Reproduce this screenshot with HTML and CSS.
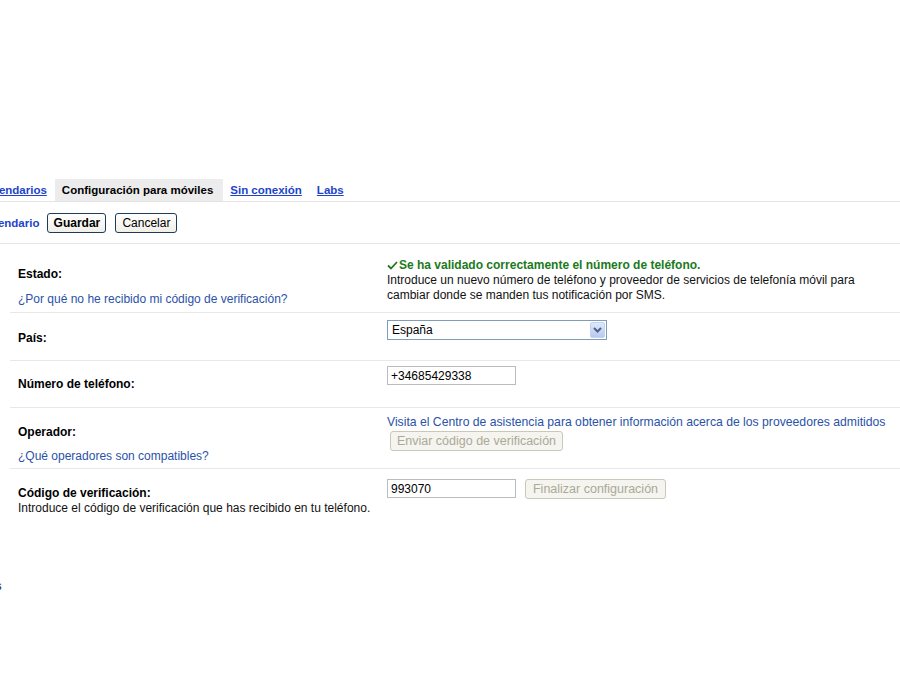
FILE: index.html
```html
<!DOCTYPE html>
<html lang="es">
<head>
<meta charset="utf-8">
<title>Configuración para móviles</title>
<link rel="stylesheet" href="styles.css">
</head>
<body>
<div class="page">
  <div class="tabs">
    <a class="tab-link" href="#">Calendarios</a>
    <span class="tab-active">Configuración para móviles</span>
    <a class="tab-link" href="#">Sin conexión</a>
    <a class="tab-link" href="#">Labs</a>
  </div>
  <div class="actions">
    <a class="back-link" href="#">Calendario</a>
    <button class="btn btn-primary">Guardar</button>
    <button class="btn btn-cancel">Cancelar</button>
  </div>
  <div class="settings">
    <div class="row row-estado">
      <div class="cell-left">
        <div class="label">Estado:</div>
        <a class="help-link gap-estado" href="#">¿Por qué no he recibido mi código de verificación?</a>
      </div>
      <div class="cell-right">
        <div class="ok"><svg class="check" width="11" height="9" viewBox="0 0 11 9"><path d="M1 4.5 L4 7.5 L10 1" fill="none" stroke="#1b7a1b" stroke-width="1.8"/></svg>Se ha validado correctamente el número de teléfono.</div>
        <div class="desc">Introduce un nuevo número de teléfono y proveedor de servicios de telefonía móvil para<br>cambiar donde se manden tus notificación por SMS.</div>
      </div>
    </div>
    <div class="row row-pais">
      <div class="cell-left"><div class="label">País:</div></div>
      <div class="cell-right">
        <div class="select"><span class="select-text">España</span><span class="select-arrow"><svg width="9" height="6" viewBox="0 0 9 6"><path d="M1 1 L4.5 4.5 L8 1" fill="none" stroke="#4d6185" stroke-width="2"/></svg></span></div>
      </div>
    </div>
    <div class="row row-numero">
      <div class="cell-left"><div class="label">Número de teléfono:</div></div>
      <div class="cell-right"><input class="field" type="text" value="+34685429338"></div>
    </div>
    <div class="row row-operador">
      <div class="cell-left">
        <div class="label">Operador:</div>
        <a class="help-link gap-operador" href="#">¿Qué operadores son compatibles?</a>
      </div>
      <div class="cell-right">
        <a class="help-link wide-link" href="#">Visita el Centro de asistencia para obtener información acerca de los proveedores admitidos</a>
        <div><button class="btn btn-disabled btn-send" disabled>Enviar código de verificación</button></div>
      </div>
    </div>
    <div class="row row-codigo">
      <div class="cell-left">
        <div class="label">Código de verificación:</div>
        <div class="desc">Introduce el código de verificación que has recibido en tu teléfono.</div>
      </div>
      <div class="cell-right inline">
        <input class="field" type="text" value="993070">
        <button class="btn btn-disabled btn-finish" disabled>Finalizar configuración</button>
      </div>
    </div>
  </div>
  <div class="footer-frag">s</div>
</div>
</body>
</html>
```

FILE: styles.css
```css
html, body {
  margin: 0;
  padding: 0;
  background: #ffffff;
  overflow: hidden;
}

body {
  font-family: "Liberation Sans", Arial, sans-serif;
  font-size: 12px;
  color: #000;
  width: 900px;
  height: 700px;
}

.page {
  padding-top: 179px;
}

.tabs {
  display: flex;
  align-items: stretch;
  height: 22px;
  margin-left: -26px;
  border-bottom: 1px solid #e4e4e4;
}

.tab-link,
.tab-active {
  display: flex;
  align-items: center;
  font-weight: bold;
  font-size: 11.5px;
  padding: 0 8px 0 7px;
}

.tab-link {
  color: #1d44c9;
  text-decoration: underline;
}

.tab-active {
  background: #ececec;
  color: #000;
  padding-right: 10px;
}

.actions {
  display: flex;
  align-items: center;
  gap: 8px;
  height: 41px;
  margin-left: -20px;
  border-bottom: 1px solid #e6e6e6;
}

.back-link {
  color: #1d44c9;
  font-weight: bold;
  text-decoration: none;
  font-size: 11.5px;
}

.btn {
  font-family: "Liberation Sans", Arial, sans-serif;
  font-size: 12px;
  height: 20px;
  padding: 0 5px;
  border: 1px solid #1f3b5c;
  border-radius: 3px;
  background: linear-gradient(#ffffff, #f0efe8);
  color: #000;
  line-height: 18px;
}

.btn-primary {
  font-weight: bold;
  width: 59px;
}

.btn-cancel {
  width: 62px;
  margin-left: 1px;
}

.btn-disabled {
  border-color: #cac8bb;
  background: #f5f4ee;
  color: #aca899;
  font-size: 12.5px;
}

.btn-send {
  width: 173px;
  margin-left: 3px;
}

.btn-finish {
  width: 141px;
  margin-left: 9px;
}

.settings {
  margin-left: 10px;
}

.row {
  display: grid;
  grid-template-columns: 377px 1fr;
  border-bottom: 1px solid #e8e8e8;
}

.row:last-child {
  border-bottom: none;
}

.cell-left {
  padding-left: 8px;
}

.label {
  font-weight: bold;
  line-height: 15px;
}

.help-link {
  display: block;
  color: #2a52a8;
  text-decoration: none;
  line-height: 15px;
}

.wide-link {
  font-size: 12.2px;
}

.desc {
  line-height: 15px;
  color: #111;
}

.ok {
  display: flex;
  align-items: center;
  color: #1b7a1b;
  font-weight: bold;
  line-height: 16px;
}

.check {
  margin-right: 1px;
}

.row-estado { height: 68px; }
.row-estado .cell-left { padding-top: 23px; }
.row-estado .cell-right { padding-top: 13px; }
.gap-estado { margin-top: 10px; }

.row-pais { height: 47px; }
.row-pais .cell-left { padding-top: 18px; }
.row-pais .cell-right { padding-top: 7px; }

.row-numero { height: 46px; }
.row-numero .cell-left { padding-top: 16px; }
.row-numero .cell-right { padding-top: 5px; }

.row-operador { height: 60px; }
.row-operador .cell-left { padding-top: 17px; }
.row-operador .cell-right { padding-top: 7px; }
.row-operador .btn-send { margin-top: 1px; }
.gap-operador { margin-top: 9px; }

.row-codigo { height: 60px; }
.row-codigo .cell-left { padding-top: 17px; }
.row-codigo .cell-right { padding-top: 10px; }

.inline {
  display: flex;
  align-items: flex-start;
}

.select {
  display: flex;
  width: 218px;
  height: 18px;
  border: 1px solid #7f9db9;
  background: #fff;
}

.select-text {
  flex: 1;
  padding-left: 4px;
  line-height: 18px;
}

.select-arrow {
  width: 15px;
  margin: 1px;
  display: flex;
  align-items: center;
  justify-content: center;
  background: linear-gradient(#dfe8fb, #b7c9ef);
  border: 1px solid #c3d3f5;
  border-radius: 2px;
  box-sizing: border-box;
}

.field {
  box-sizing: border-box;
  width: 129px;
  height: 19px;
  border: 1px solid #b9bdc3;
  padding: 0 3px;
  font-family: "Liberation Sans", Arial, sans-serif;
  font-size: 12px;
  color: #000;
  margin: 0;
}

.footer-frag {
  margin-top: 50px;
  margin-left: -5px;
  font-weight: bold;
  color: #444;
}
```
